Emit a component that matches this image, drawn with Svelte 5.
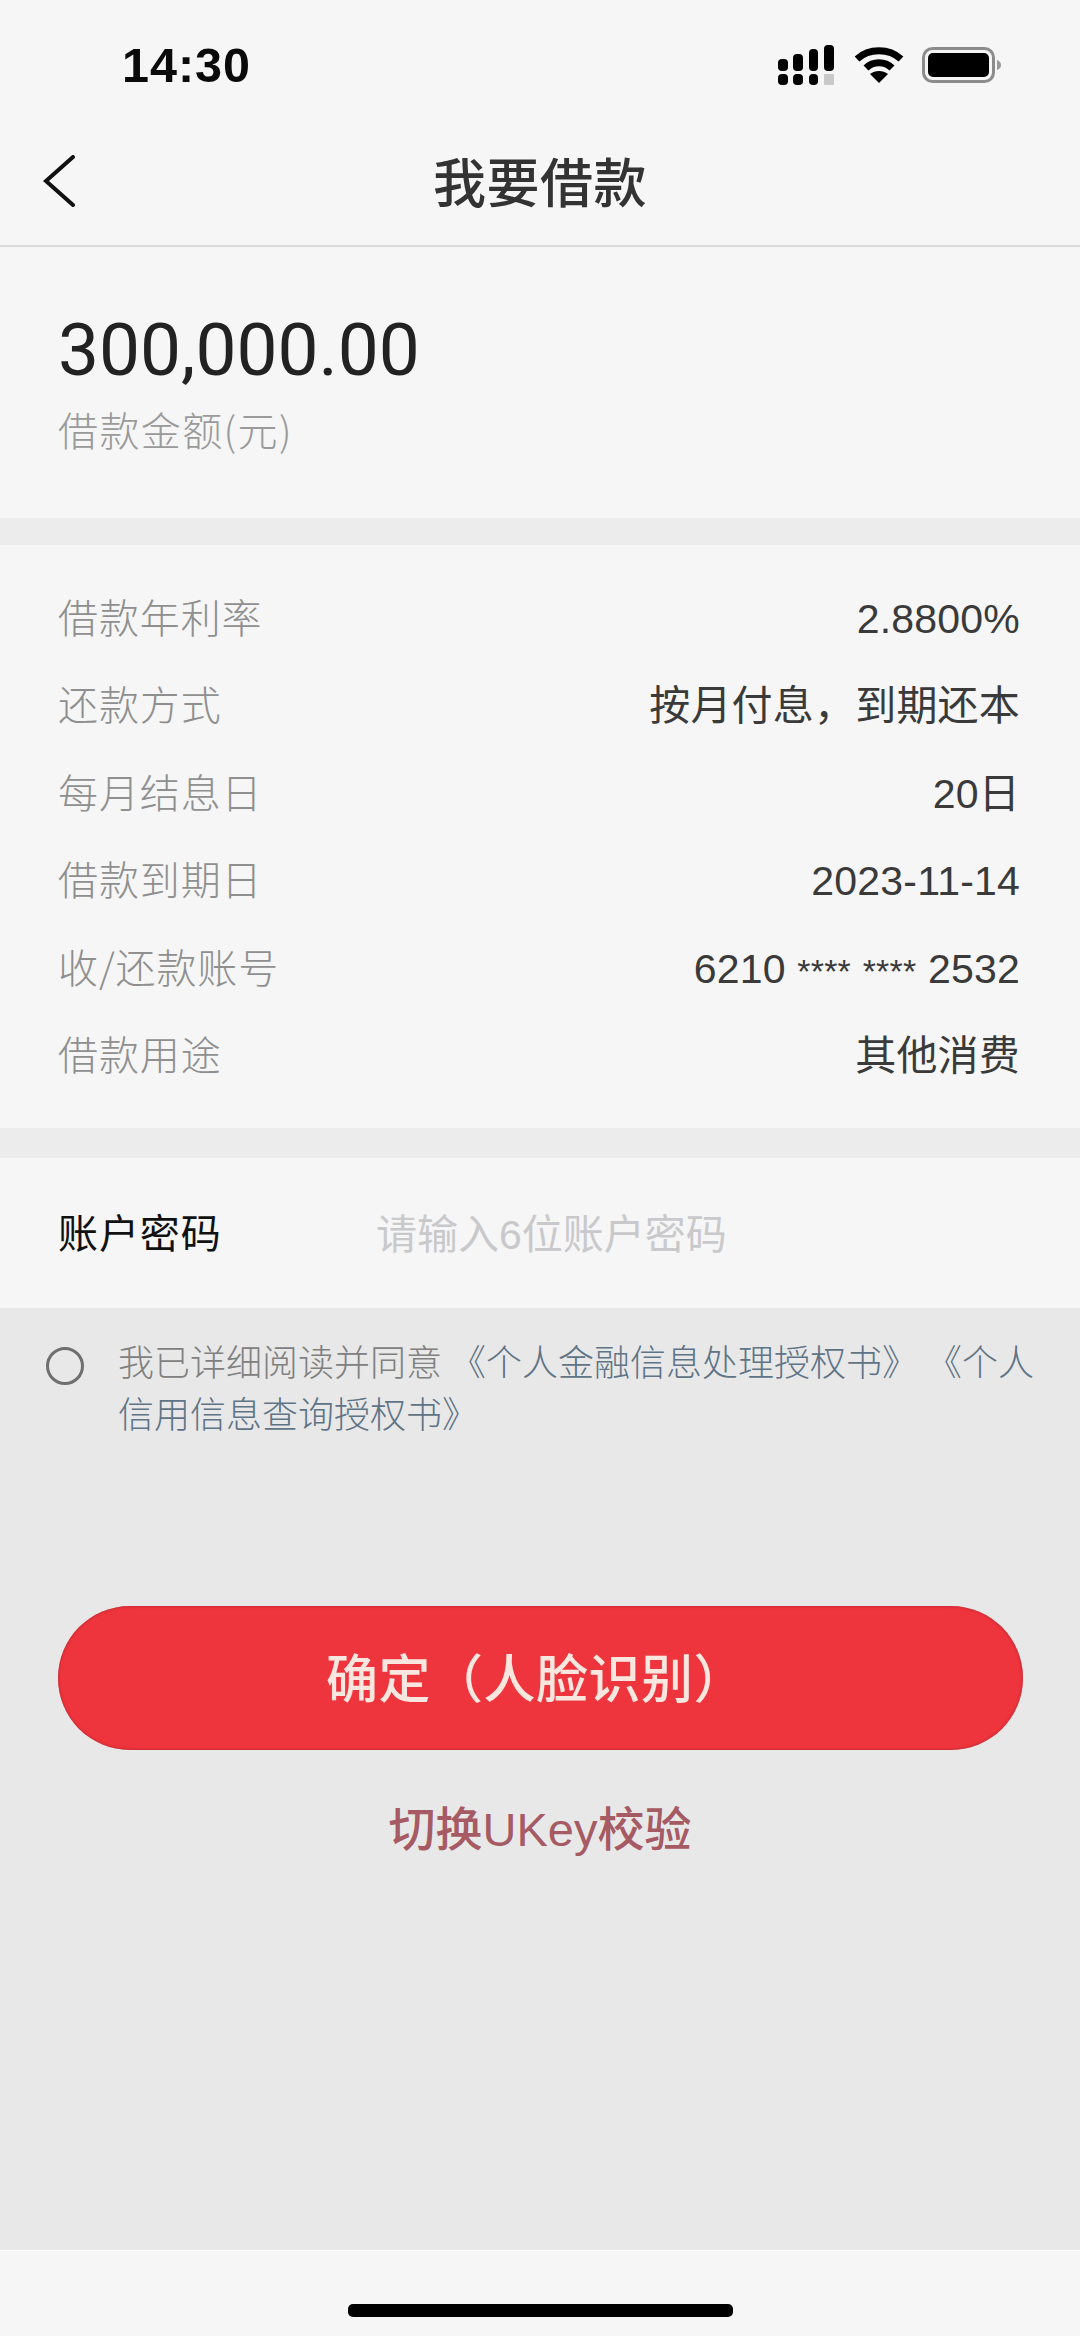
<script>
  const rows = [
    ['借款年利率', '2.8800%'],
    ['还款方式', '按月付息，到期还本'],
    ['每月结息日', '20日'],
    ['借款到期日', '2023-11-14'],
    ['收/还款账号', '6210 **** **** 2532'],
    ['借款用途', '其他消费']
  ];
  const parts = (v) => v.split(/(\*{4})/);
</script>

<div class="page">
  <div class="status">
    <span class="time">14:30</span>
    <div class="status-icons">
      <svg width="58" height="40" viewBox="0 0 58 40" fill="#000">
        <rect x="0" y="14" width="10" height="12" rx="4"/><rect x="0" y="29" width="10" height="11" rx="4"/>
        <rect x="15" y="9" width="10" height="17" rx="4"/><rect x="15" y="29" width="10" height="11" rx="4"/>
        <rect x="31" y="4" width="9" height="22" rx="4"/><rect x="31" y="29" width="9" height="11" rx="4"/>
        <rect x="46" y="0" width="10" height="26" rx="4"/><rect x="46" y="29" width="10" height="11" rx="1" fill="#c9c9c9"/>
      </svg>
      <svg width="50" height="38" viewBox="0 0 50 38" fill="none" stroke="#000" stroke-width="7">
        <path d="M3 13C15 2 35 2 47 13"/>
        <path d="M12 22C19 15 31 15 38 22"/>
        <path d="M25 37L16 28C21 24 29 24 34 28Z" fill="#000" stroke="none"/>
      </svg>
      <svg width="80" height="36" viewBox="0 0 80 36">
        <rect x="1.5" y="1.5" width="70" height="33" rx="9" fill="none" stroke="#8c8c8c" stroke-width="3"/>
        <rect x="6" y="6" width="61" height="24" rx="5" fill="#000"/>
        <path d="M75 13C78 14 79 16 79 18C79 20 78 22 75 23Z" fill="#999"/>
      </svg>
    </div>
  </div>

  <header class="nav">
    <svg class="back" width="32" height="52" viewBox="0 0 32 52" fill="none" stroke="#111" stroke-width="4" stroke-linecap="round" stroke-linejoin="miter">
      <path d="M30 2L3 26L30 50"/>
    </svg>
    <h1>我要借款</h1>
  </header>

  <section class="amount">
    <div class="value">300,000.00</div>
    <div class="caption">借款金额(元)</div>
  </section>

  <section class="details">
    {#each rows as [label, value]}
      <div class="row">
        <span class="label">{label}</span>
        <span class="val">{#each parts(value) as part}{#if part === '****'}<span class="stars">{part}</span>{:else}{part}{/if}{/each}</span>
      </div>
    {/each}
  </section>

  <section class="password">
    <span class="pw-label">账户密码</span>
    <span class="placeholder">请输入6位账户密码</span>
  </section>

  <main class="lower">
    <div class="agree">
      <span class="radio"></span>
      <p>我已详细阅读并同意 <a>《个人金融信息处理授权书》 《个人信用信息查询授权书》</a></p>
    </div>
    <button class="confirm">确定（人脸识别）</button>
    <div class="switch">切换UKey校验</div>
  </main>

  <footer class="home">
    <span class="bar"></span>
  </footer>
</div>

<style>
  :global(body) {
    margin: 0;
    background: #f6f6f6;
  }
  .page {
    width: 1080px;
    height: 2336px;
    display: flex;
    flex-direction: column;
    background: #f6f6f6;
    font-family: "Noto Sans CJK SC", "Liberation Sans", sans-serif;
    color: #2a2a2a;
    overflow: hidden;
  }
  .status {
    height: 130px;
    box-sizing: border-box;
    padding: 43px 78px 0 122px;
    display: flex;
    justify-content: space-between;
    align-items: flex-start;
  }
  .time {
    font-family: "Liberation Sans", sans-serif;
    font-weight: 700;
    font-size: 48.5px;
    line-height: 44px;
    color: #0a0a0a;
    letter-spacing: 1px;
  }
  .status-icons {
    display: flex;
    align-items: center;
    gap: 18px;
    margin-top: 2px;
  }
  .nav {
    height: 117px;
    box-sizing: border-box;
    border-bottom: 2px solid #d9d9d9;
    display: flex;
    align-items: center;
    justify-content: center;
    position: relative;
  }
  .back {
    position: absolute;
    left: 43px;
    top: 25px;
  }
  h1 {
    margin: 0 0 16px;
    font-size: 53px;
    font-weight: 500;
    letter-spacing: 0.5px;
    color: #333;
    line-height: 60px;
  }
  .amount {
    height: 271px;
    box-sizing: border-box;
    padding: 61px 58px 0;
  }
  .value {
    font-family: Roboto, "Liberation Sans", sans-serif;
    font-size: 73px;
    line-height: 84px;
    color: #222;
  }
  .caption {
    margin-top: 13px;
    font-size: 40px;
    line-height: 48px;
    color: #9a9a9a;
    font-weight: 300;
    letter-spacing: 1.4px;
  }
  .details {
    border-top: 27px solid #ececec;
    border-bottom: 30px solid #ececec;
    height: 640px;
    box-sizing: border-box;
    padding: 27.5px 60px 0 58px;
  }
  .row {
    height: 87.6px;
    display: flex;
    justify-content: space-between;
    align-items: baseline;
    line-height: 87.6px;
  }
  .label {
    font-size: 40px;
    letter-spacing: 0.9px;
    color: #8f8f8f;
    font-weight: 300;
  }
  .val {
    font-family: "Liberation Sans", "Noto Sans CJK SC", sans-serif;
    font-size: 41px;
    letter-spacing: 0.2px;
    color: #3a3a3a;
  }
  .stars {
    font-size: 34px;
  }
  .password {
    height: 150px;
    box-sizing: border-box;
    padding: 0 58px 4px;
    display: flex;
    align-items: center;
  }
  .pw-label {
    width: 318px;
    font-size: 40px;
    color: #111;
    letter-spacing: 0.9px;
  }
  .placeholder {
    font-family: "Liberation Sans", "Noto Sans CJK SC", sans-serif;
    font-size: 41px;
    color: #c9c9cc;
  }
  .lower {
    flex: 1;
    background: #e8e8e8;
    display: flex;
    flex-direction: column;
    align-items: center;
    border-bottom: 1px solid #fff;
  }
  .agree {
    width: 100%;
    box-sizing: border-box;
    padding: 26px 30px 0 46px;
    display: flex;
    align-items: flex-start;
    gap: 34px;
    height: 298px;
    flex: none;
  }
  .radio {
    flex: none;
    width: 32px;
    height: 32px;
    margin-top: 13px;
    border: 3px solid #6f6f6f;
    border-radius: 50%;
  }
  .agree p {
    margin: 0;
    font-size: 36px;
    line-height: 52px;
    color: #808080;
    font-weight: 300;
  }
  .agree a {
    color: #5f7486;
  }
  .confirm {
    width: 965px;
    height: 144px;
    flex: none;
    border: none;
    border-radius: 72px;
    background: #ee343c;
    color: #f8e6df;
    font-family: inherit;
    font-size: 52px;
    font-weight: 500;
    box-shadow: inset 0 0 3px #a8272f;
    padding: 0 8px 6px 0;
    letter-spacing: 0.5px;
  }
  .switch {
    margin-top: 52px;
    font-family: "Liberation Sans", "Noto Sans CJK SC", sans-serif;
    font-size: 47px;
    line-height: 56px;
    color: #a65a63;
    font-weight: 500;
  }
  .home {
    height: 85px;
    flex: none;
    display: flex;
    justify-content: center;
    box-sizing: border-box;
    padding-top: 53px;
  }
  .bar {
    width: 385px;
    height: 13px;
    background: #000;
    border-radius: 5px;
  }
</style>
